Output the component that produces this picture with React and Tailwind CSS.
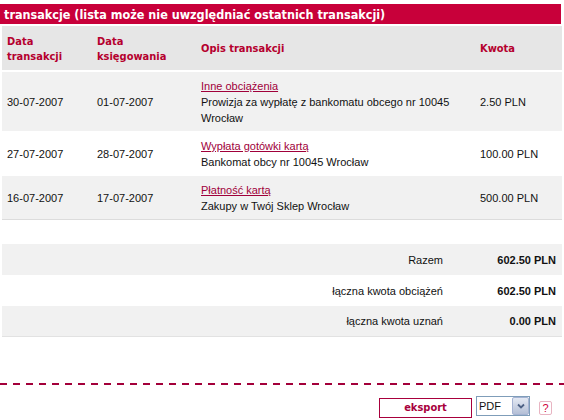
import { useState } from 'react';

const ROWS = [
  {
    date: '30-07-2007',
    booked: '01-07-2007',
    title: 'Inne obciążenia',
    desc: 'Prowizja za wypłatę z bankomatu obcego nr 10045 Wrocław',
    amount: '2.50 PLN',
  },
  {
    date: '27-07-2007',
    booked: '28-07-2007',
    title: 'Wypłata gotówki kartą',
    desc: 'Bankomat obcy nr 10045 Wrocław',
    amount: '100.00 PLN',
  },
  {
    date: '16-07-2007',
    booked: '17-07-2007',
    title: 'Płatność kartą',
    desc: 'Zakupy w Twój Sklep Wrocław',
    amount: '500.00 PLN',
  },
];

const TOTALS = [
  { label: 'Razem', value: '602.50 PLN' },
  { label: 'łączna kwota obciążeń', value: '602.50 PLN' },
  { label: 'łączna kwota uznań', value: '0.00 PLN' },
];

const cols = 'grid grid-cols-[95px_104px_279px_1fr]';

export default function App() {
  const [format, setFormat] = useState('PDF');

  return (
    <div className="w-[564px] h-[420px] bg-white text-[11px] leading-[16px] text-[#111] font-['Liberation_Sans',Arial,sans-serif] pt-[4px] overflow-hidden">
      <div className="h-[20px] w-[561px] bg-[#c8003a] text-white font-bold text-[12.5px] leading-[21px] pl-[4px] font-['DejaVu_Sans_Condensed','Liberation_Sans',sans-serif]">
        transakcje (lista może nie uwzględniać ostatnich transakcji)
      </div>

      <div className="ml-[2px] w-[560px] mt-[2px]">
        {/* header */}
        <div className={`${cols} items-center h-[46px] bg-[#e6e6e6] border-b-2 border-white text-[#b5002e] font-bold font-['DejaVu_Sans_Condensed','Liberation_Sans',sans-serif] text-[11px] leading-[15px]`}>
          <div className="pl-[5px] pt-[1px]">Data<br />transakcji</div>
          <div className="pt-[1px]">Data<br />księgowania</div>
          <div className="pt-[1px]">Opis transakcji</div>
          <div className="pt-[1px]">Kwota</div>
        </div>

        {ROWS.map((r, i) => (
          <div
            key={r.date}
            className={`${cols} items-center pt-[6px] pb-[5px] border-b ${i % 2 === 0 ? 'bg-[#f1f1f1]' : 'bg-white'} ${i === ROWS.length - 1 ? 'border-[#dcdcdc]' : 'border-white'}`}
          >
            <div className="pl-[5px]">{r.date}</div>
            <div>{r.booked}</div>
            <div>
              <a href="#" className="text-[#a0003a] underline">{r.title}</a>
              <div>{r.desc}</div>
            </div>
            <div>{r.amount}</div>
          </div>
        ))}

        <div className="h-[24px]" />

        {TOTALS.map((t, i) => (
          <div
            key={t.label}
            className={`flex items-center h-[31px] ${i % 2 === 0 ? 'bg-[#f1f1f1]' : 'bg-white'} ${i === TOTALS.length - 1 ? 'border-b border-[#e2e2e2]' : ''}`}
          >
            <div className="w-[441px] text-right">{t.label}</div>
            <div className="flex-1 text-right pr-[6px] font-bold">{t.value}</div>
          </div>
        ))}
      </div>

      <div className="mt-[46px] h-[2px] w-full bg-[repeating-linear-gradient(90deg,#a3003a_0px,#a3003a_7px,transparent_7px,transparent_13px)]" />

      <div className="flex items-center justify-end gap-[4px] pr-[12px] mt-[11px]">
        <button className="w-[93px] h-[20px] border border-[#a8003c] bg-white text-[#a8003c] font-bold text-[11px] font-['DejaVu_Sans_Condensed','Liberation_Sans',sans-serif]">
          eksport
        </button>
        <div className="flex items-center h-[20px] w-[54px] border border-[#7f9db9] bg-white mb-[3px]">
          <span className="flex-1 pl-[2px] text-[11px] leading-[18px]">{format}</span>
          <span
            className="w-[17px] h-[18px] flex items-center justify-center bg-gradient-to-b from-[#e4e9f3] to-[#b4bfd6] border border-[#a5b3d3] rounded-[2px]"
            onClick={() => setFormat(format)}
          >
            <svg width="8" height="6" viewBox="0 0 8 6">
              <path d="M1 1.5 L4 4.5 L7 1.5" stroke="#4d6185" strokeWidth="1.8" fill="none" />
            </svg>
          </span>
        </div>
        <span className="ml-[5px] w-[13px] h-[14px] border border-[#e8b4c2] rounded-[2px] text-[#d0003c] text-[11px] leading-[12px] flex items-center justify-center">
          ?
        </span>
      </div>
    </div>
  );
}
